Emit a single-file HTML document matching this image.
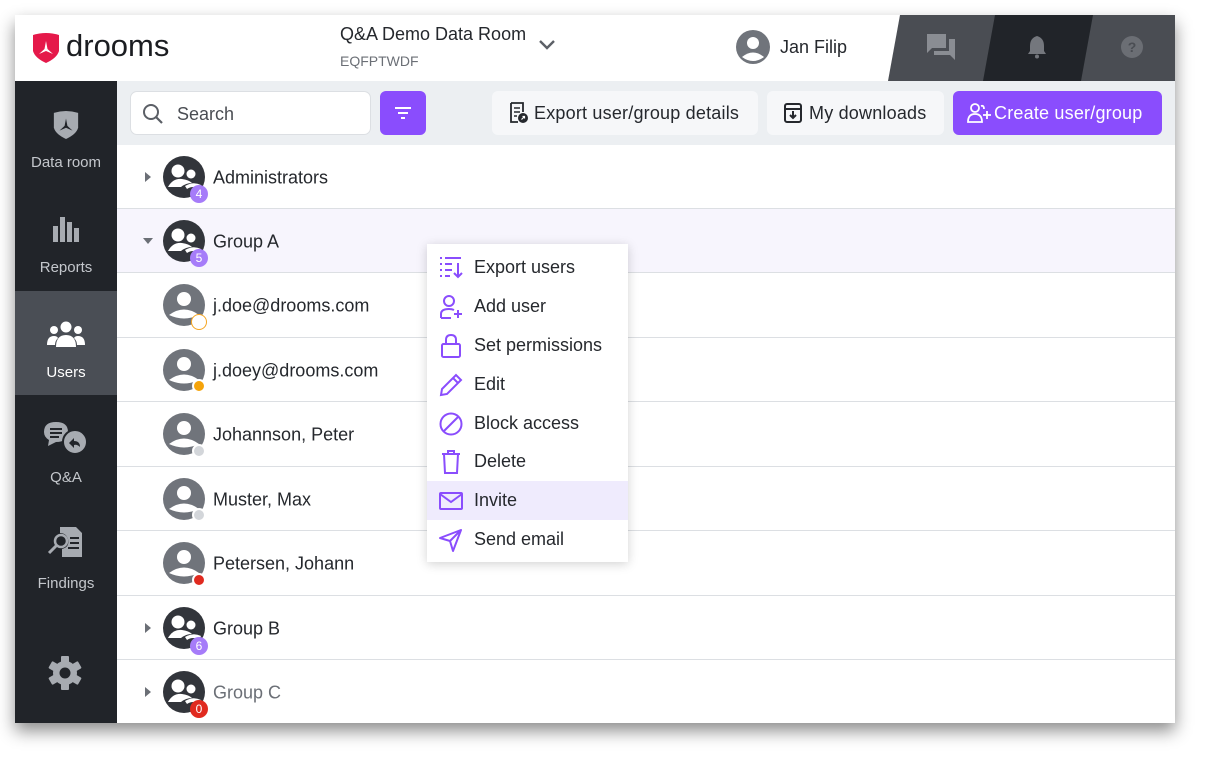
<!DOCTYPE html>
<html><head><meta charset="utf-8"><style>
*{box-sizing:border-box;margin:0;padding:0}
body{width:1211px;height:757px;background:#fff;font-family:"Liberation Sans",sans-serif;position:relative;overflow:hidden;color:#25282d}
.win{position:absolute;left:15px;top:15px;width:1160px;height:708px;background:#fff;box-shadow:0 8px 16px rgba(0,0,0,.45);overflow:hidden}
.hdr{position:absolute;left:0;top:0;width:1160px;height:66px;background:#fff}
.side{position:absolute;left:0;top:66px;width:102px;height:642px;background:#212429}
.si{position:absolute;left:0;width:102px;height:104px;text-align:center;color:#c4c7cc;font-size:15px}
.si svg{display:block;margin:0 auto}
.tb{position:absolute;left:102px;top:66px;width:1058px;height:64px;background:#eceff2}
.btn{position:absolute;top:10px;height:44px;border-radius:6px;background:#f6f7f9;font-size:18px;color:#25282d;display:flex;align-items:center;gap:6px;padding-left:14px;letter-spacing:0.2px}
.row{position:absolute;left:102px;width:1058px;border-bottom:1px solid #dcdfe3;font-size:18px;color:#25282d}
.row .t{position:absolute;left:96px;top:50%;transform:translateY(-45%)}
.av{position:absolute;left:46px;top:50%;margin-top:-21px}
.badge{position:absolute;width:18px;height:18px;border-radius:50%;color:#fff;font-size:12px;text-align:center;line-height:18px;left:73px}
.dot{position:absolute;width:14px;height:14px;border-radius:50%;left:75px;border:2px solid #fff}
.car{position:absolute;left:28px;top:50%;margin-top:-5px;width:0;height:0}
.menu{position:absolute;left:427px;top:244px;width:201px;height:318px;background:#fff;box-shadow:0 2px 10px rgba(0,0,0,.18)}
.mi{position:absolute;left:0;width:201px;height:39px;font-size:18px;color:#25282d;display:flex;align-items:center}
.mi svg{position:absolute;left:11px}
.mi span{position:absolute;left:47px}
</style></head><body>
<div class="win">
<div class="hdr">
 <svg style="position:absolute;left:16px;top:17px" width="30" height="32" viewBox="0 0 30 32"><path d="M2 3 Q15 -1 28 3 L28 19 Q26 26 15 31 Q4 26 2 19Z" fill="#e5194a"/><path d="M15 9 L16.5 17 L22 22 L15 19 L8 22 L13.5 17Z" fill="#fff"/></svg>
 <div style="position:absolute;left:51px;top:13px;font-size:31px;color:#1b1d21;letter-spacing:0px">drooms</div>
 <div style="position:absolute;left:325px;top:9px;font-size:18px;color:#25282d">Q&amp;A Demo Data Room</div>
 <div style="position:absolute;left:325px;top:38px;font-size:14px;color:#6b6f76">EQFPTWDF</div>
 <svg style="position:absolute;left:523px;top:24px" width="18" height="12" viewBox="0 0 18 12"><path d="M2 2 L9 9 L16 2" stroke="#5c6067" stroke-width="2.4" fill="none"/></svg>
 <svg style="position:absolute;left:720px;top:14px" width="36" height="36" viewBox="0 0 36 36"><circle cx="18" cy="18" r="17" fill="#70747b"/><circle cx="18" cy="14" r="6" fill="#fff"/><path d="M7 28 Q18 19 29 28 Q18 36 7 28Z" fill="#fff"/></svg>
 <div style="position:absolute;left:765px;top:22px;font-size:18px;color:#25282d">Jan Filip</div>
 <div style="position:absolute;left:873px;top:0;width:287px;height:66px;background:#4a4d53;clip-path:polygon(12px 0,100% 0,100% 100%,0 100%)"></div>
 <div style="position:absolute;left:968px;top:0;width:110px;height:66px;background:#212429;clip-path:polygon(12px 0,110px 0,98px 100%,0 100%)"></div>
 <svg style="position:absolute;left:911px;top:18px" width="30" height="28" viewBox="0 0 30 28"><path d="M1 1 H20 V15 H6 L1 20Z" fill="#8a8d93"/><path d="M23 6 H29 V27 L24 22 H8 V18 H23Z" fill="#8a8d93"/></svg>
 <svg style="position:absolute;left:1012px;top:20px" width="20" height="24" viewBox="0 0 20 24"><path d="M10 1 Q3 3 3 11 V16 L1 19 H19 L17 16 V11 Q17 3 10 1Z" fill="#74777d"/><circle cx="10" cy="21.5" r="2" fill="#74777d"/></svg>
 <svg style="position:absolute;left:1106px;top:21px" width="22" height="22" viewBox="0 0 22 22"><circle cx="11" cy="11" r="11" fill="#6b6e74"/><text x="11" y="16" font-size="14" font-weight="bold" text-anchor="middle" fill="#4a4d53" font-family="Liberation Sans">?</text></svg>
</div>
<div class="side">
 <div class="si" style="top:0"><svg style="margin-top:28px" width="28" height="32" viewBox="0 0 30 32"><path d="M2 3 Q15 -1 28 3 L28 19 Q26 26 15 31 Q4 26 2 19Z" fill="#a7abb1"/><path d="M15 9 L16.5 17 L22 22 L15 19 L8 22 L13.5 17Z" fill="#212429"/></svg><div style="margin-top:13px">Data room</div></div>
 <div class="si" style="top:105px"><svg style="margin-top:28px" width="30" height="30" viewBox="0 0 30 30"><rect x="2" y="12" width="5" height="16" fill="#a7abb1"/><rect x="9" y="3" width="5" height="25" fill="#a7abb1"/><rect x="16" y="8" width="5" height="20" fill="#a7abb1"/><rect x="23" y="14" width="5" height="14" fill="#a7abb1"/></svg><div style="margin-top:15px">Reports</div></div>
 <div class="si" style="top:210px;background:#4a4e55;color:#fff"><svg style="margin-top:30px" width="40" height="28" viewBox="0 0 40 28"><circle cx="20" cy="6" r="5.5" fill="#fff"/><circle cx="8" cy="9" r="4" fill="#fff"/><circle cx="32" cy="9" r="4" fill="#fff"/><path d="M10 26 Q10 14 20 14 Q30 14 30 26Z" fill="#fff"/><path d="M1 24 Q1 15 8 15 Q11 15 12 17 Q9 20 9 24Z" fill="#fff"/><path d="M39 24 Q39 15 32 15 Q29 15 28 17 Q31 20 31 24Z" fill="#fff"/></svg><div style="margin-top:15px">Users</div></div>
 <div class="si" style="top:315px"><svg style="margin-top:24px" width="48" height="40" viewBox="0 0 48 40"><path d="M14 2 Q26 2 26 12 Q26 22 14 22 L6 26 L7 20 Q2 17 2 12 Q2 2 14 2Z" fill="#a7abb1"/><rect x="8" y="8" width="12" height="2" fill="#212429"/><rect x="8" y="12" width="12" height="2" fill="#212429"/><rect x="8" y="16" width="9" height="2" fill="#212429"/><circle cx="33" cy="22" r="12" fill="#a7abb1" stroke="#212429" stroke-width="2"/><path d="M27 23 L32 18 V21 Q38 21 38 27 Q35 24 32 25 V28Z" fill="#212429"/></svg><div style="margin-top:9px">Q&amp;A</div></div>
 <div class="si" style="top:420px"><svg style="margin-top:24px" width="40" height="36" viewBox="0 0 40 36"><path d="M14 2 H30 L36 8 V32 H16 V24 Q24 22 22 14 Q20 8 14 8Z" fill="#a7abb1"/><rect x="24" y="12" width="9" height="2" fill="#212429"/><rect x="24" y="17" width="9" height="2" fill="#212429"/><rect x="22" y="22" width="11" height="2" fill="#212429"/><circle cx="15" cy="16" r="6" fill="none" stroke="#a7abb1" stroke-width="2.5"/><path d="M11 20 L3 28" stroke="#a7abb1" stroke-width="3"/></svg><div style="margin-top:14px">Findings</div></div>
 <svg style="position:absolute;left:32px;top:574px" width="36" height="36" viewBox="0 0 36 36"><g fill="#a7abb1"><circle cx="18" cy="18" r="12"/><rect x="14" y="1" width="8" height="34" rx="1"/><rect x="14" y="1" width="8" height="34" rx="1" transform="rotate(60 18 18)"/><rect x="14" y="1" width="8" height="34" rx="1" transform="rotate(120 18 18)"/></g><circle cx="18" cy="18" r="5.5" fill="#212429"/></svg>
</div>
<div class="tb">
 <div style="position:absolute;left:13px;top:10px;width:241px;height:44px;background:#fff;border:1px solid #dcdfe3;border-radius:7px"><svg style="position:absolute;left:11px;top:11px" width="22" height="22" viewBox="0 0 22 22"><circle cx="9" cy="9" r="7" fill="none" stroke="#5b5f66" stroke-width="2"/><path d="M14 14 L20 20" stroke="#5b5f66" stroke-width="2.2"/></svg><span style="position:absolute;left:46px;top:12px;font-size:18px;color:#4a4d53">Search</span></div>
 <div style="position:absolute;left:263px;top:10px;width:46px;height:44px;background:#8a4dfd;border-radius:6px"><svg style="position:absolute;left:14px;top:15px" width="18" height="14" viewBox="0 0 18 14"><path d="M1 2 H17 M4 7 H14 M7 12 H11" stroke="#fff" stroke-width="2"/></svg></div>
 <div class="btn" style="left:375px;width:266px;gap:4px"><svg width="24" height="24" viewBox="0 0 24 24"><path d="M5 2 H17 V11 M5 2 V21 H12" stroke="#25282d" stroke-width="1.8" fill="none"/><path d="M8 7 H14 M8 11 H14 M8 15 H11" stroke="#25282d" stroke-width="1.6"/><circle cx="17" cy="17" r="5" fill="#25282d"/><path d="M15.5 18.5 L18.5 15.5 M16.5 15.5 H18.5 V17.5" stroke="#fff" stroke-width="1.2" fill="none"/></svg>Export user/group details</div>
 <div class="btn" style="left:650px;width:177px;gap:4px"><svg width="24" height="24" viewBox="0 0 24 24"><rect x="4" y="3" width="16" height="18" rx="2" stroke="#25282d" stroke-width="2" fill="none"/><path d="M4 8 H20 M12 10 V17 M9 14 L12 17 L15 14" stroke="#25282d" stroke-width="2" fill="none"/></svg>My downloads</div>
 <div class="btn" style="left:836px;width:209px;background:#8a4dfd;color:#fff;padding-left:13px;gap:2px"><svg width="26" height="22" viewBox="0 0 26 22"><circle cx="9" cy="6" r="4" stroke="#fff" stroke-width="1.8" fill="none"/><path d="M2 20 Q2 12 9 12 Q16 12 16 20Z M15 4 Q18 3 18 7" stroke="#fff" stroke-width="1.8" fill="none"/><path d="M21 9 V17 M17 13 H25" stroke="#fff" stroke-width="1.8"/></svg>Create user/group</div>
</div>

<svg width="0" height="0" style="position:absolute"><defs>
<symbol id="grp" viewBox="0 0 42 42"><circle cx="21" cy="21" r="21" fill="#32353b"/><circle cx="15" cy="15" r="6.5" fill="#fff"/><circle cx="28" cy="18" r="4.5" fill="#fff"/><path d="M5 31 Q10 22 19 23 Q26 24 29 27 Q23 27 18 31 Z" fill="#fff"/><path d="M22 30 Q30 25 38 29 L36 33 Q30 29 24 33Z" fill="#fff"/></symbol>
<symbol id="usr" viewBox="0 0 42 42"><circle cx="21" cy="21" r="21" fill="#70747b"/><circle cx="21" cy="15" r="7" fill="#fff"/><path d="M6 31 Q21 20 36 31 Q21 38 6 31Z" fill="#fff"/></symbol>
</defs></svg>

<div class="row" style="top:130px;height:64px"><div class="car" style="border-left:6px solid #6b6f76;border-top:5px solid transparent;border-bottom:5px solid transparent"></div><svg class="av" width="42" height="42"><use href="#grp"/></svg><div class="badge" style="top:40px;background:#a67cf9">4</div><span class="t">Administrators</span></div>
<div class="row" style="top:194px;height:64px;background:#f7f5fd"><div class="car" style="margin-left:-2px;margin-top:-3px;border-top:6px solid #6b6f76;border-left:5px solid transparent;border-right:5px solid transparent"></div><svg class="av" width="42" height="42"><use href="#grp"/></svg><div class="badge" style="top:40px;background:#a67cf9">5</div><span class="t">Group A</span></div>
<div class="row" style="top:258px;height:65px"><svg class="av" width="42" height="42"><use href="#usr"/></svg><div class="dot" style="top:41px;width:16px;height:16px;left:74px;background:#fff;border:1.5px solid #f5a623"></div><span class="t">j.doe@drooms.com</span></div>
<div class="row" style="top:323px;height:64px"><svg class="av" width="42" height="42"><use href="#usr"/></svg><div class="dot" style="top:41px;background:#f5a30a"></div><span class="t">j.doey@drooms.com</span></div>
<div class="row" style="top:387px;height:65px"><svg class="av" width="42" height="42"><use href="#usr"/></svg><div class="dot" style="top:42px;background:#d3d6da"></div><span class="t">Johannson, Peter</span></div>
<div class="row" style="top:452px;height:64px"><svg class="av" width="42" height="42"><use href="#usr"/></svg><div class="dot" style="top:41px;background:#d3d6da"></div><span class="t">Muster, Max</span></div>
<div class="row" style="top:516px;height:65px"><svg class="av" width="42" height="42"><use href="#usr"/></svg><div class="dot" style="top:42px;background:#e02a1f"></div><span class="t">Petersen, Johann</span></div>
<div class="row" style="top:581px;height:64px"><div class="car" style="border-left:6px solid #6b6f76;border-top:5px solid transparent;border-bottom:5px solid transparent"></div><svg class="av" width="42" height="42"><use href="#grp"/></svg><div class="badge" style="top:41px;background:#a67cf9">6</div><span class="t">Group B</span></div>
<div class="row" style="top:645px;height:63px;border:none"><div class="car" style="border-left:6px solid #6b6f76;border-top:5px solid transparent;border-bottom:5px solid transparent"></div><svg class="av" width="42" height="42"><use href="#grp"/></svg><div class="badge" style="top:40px;background:#e02a1f">0</div><span class="t" style="color:#6b6f76">Group C</span></div>
</div>

<div class="menu">
 <div class="mi" style="top:4px"><svg width="26" height="26" viewBox="0 0 26 26" fill="none" stroke="#8a4dfd" stroke-width="2"><path d="M2 3 H4 M7 3 H23 M2 9 H4 M7 9 H14 M2 15 H4 M7 15 H14 M2 21 H4 M7 21 H12 M20 8 V22 M16 18 L20 22 L24 18"/></svg><span>Export users</span></div>
 <div class="mi" style="top:43px"><svg width="26" height="26" viewBox="0 0 26 26" fill="none" stroke="#8a4dfd" stroke-width="2"><circle cx="11" cy="7" r="5"/><path d="M3 24 V20 Q3 15 11 15 Q14 15 16 16 M3 24 H13 M20 16 V24 M16 20 H24"/></svg><span>Add user</span></div>
 <div class="mi" style="top:82px"><svg width="26" height="26" viewBox="0 0 26 26" fill="none" stroke="#8a4dfd" stroke-width="2"><rect x="4" y="11" width="18" height="13" rx="1.5"/><path d="M8 11 V7 Q8 2 13 2 Q18 2 18 7 V11"/></svg><span>Set permissions</span></div>
 <div class="mi" style="top:121px"><svg width="26" height="26" viewBox="0 0 26 26" fill="none" stroke="#8a4dfd" stroke-width="2"><path d="M3 23 L4 17 L18 3 L23 8 L9 22Z M15 6 L20 11"/></svg><span>Edit</span></div>
 <div class="mi" style="top:160px"><svg width="26" height="26" viewBox="0 0 26 26" fill="none" stroke="#8a4dfd" stroke-width="2"><circle cx="13" cy="13" r="10.5"/><path d="M5.5 20.5 L20.5 5.5"/></svg><span>Block access</span></div>
 <div class="mi" style="top:198px"><svg width="26" height="26" viewBox="0 0 26 26" fill="none" stroke="#8a4dfd" stroke-width="2"><path d="M4 5 H22 M10 5 V2 H16 V5 M6 5 L7 24 H19 L20 5"/></svg><span>Delete</span></div>
 <div class="mi" style="top:237px;background:#efebfd"><svg width="26" height="26" viewBox="0 0 26 26" fill="none" stroke="#8a4dfd" stroke-width="2"><rect x="2" y="5" width="22" height="16" rx="1"/><path d="M2 6 L13 14 L24 6"/></svg><span>Invite</span></div>
 <div class="mi" style="top:276px"><svg width="26" height="26" viewBox="0 0 26 26" fill="none" stroke="#8a4dfd" stroke-width="2" stroke-linejoin="round"><path d="M2 11 L23 3 L15 24 L12 14Z M12 14 L23 3"/></svg><span>Send email</span></div>
</div>
</body></html>
